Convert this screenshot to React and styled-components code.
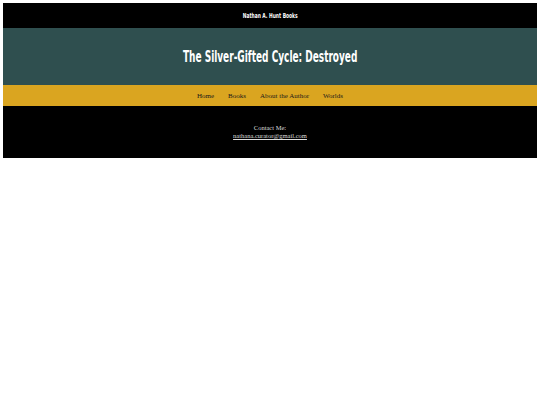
import styled, { createGlobalStyle } from "styled-components";

const GlobalStyle = createGlobalStyle`
  body {
    margin: 3px;
    background-color: #fff;
    font-family: "Liberation Serif", "Times New Roman", serif;
  }
`;

// Impact-like condensed heading face, squeezed horizontally
const Condensed = styled.span`
  display: inline-block;
  font-family: Impact, "DejaVu Sans Condensed", "DejaVu Sans", sans-serif;
  font-stretch: condensed;
  font-weight: bold;
  transform: scaleX(${(p) => p.$squeeze || 0.7});
  white-space: nowrap;
`;

const TopBar = styled.header`
  background-color: #000;
  color: #fff;
  height: 25px;
  display: flex;
  align-items: center;
  justify-content: center;
  font-size: 7px;
`;

const Banner = styled.div`
  background-color: #2f4f4f;
  height: 57px;
  display: flex;
  align-items: center;
  justify-content: center;
`;

const Title = styled.h1`
  margin: 0;
  color: #fff;
  font-size: 15px;
  font-weight: bold;
`;

const Nav = styled.nav`
  background-color: #daa520;
  height: 21px;
  display: flex;
  align-items: center;
  justify-content: center;
  gap: 14px;
`;

const NavLink = styled.a`
  color: #1a1a1a;
  font-size: 7px;
  text-decoration: none;
`;

const Footer = styled.footer`
  background-color: #000;
  color: #ddd;
  height: 52px;
  display: flex;
  flex-direction: column;
  align-items: center;
  justify-content: center;
  font-size: 6.5px;
  line-height: 8px;
`;

const Email = styled.a`
  color: #ddd;
  text-decoration: underline;
`;

export default function App() {
  return (
    <>
      <GlobalStyle />
      <TopBar>
        <Condensed $squeeze={0.7}>Nathan A. Hunt Books</Condensed>
      </TopBar>
      <Banner>
        <Title>
          <Condensed $squeeze={0.665}>The Silver-Gifted Cycle: Destroyed</Condensed>
        </Title>
      </Banner>
      <Nav>
        <NavLink href="#">Home</NavLink>
        <NavLink href="#">Books</NavLink>
        <NavLink href="#">About the Author</NavLink>
        <NavLink href="#">Worlds</NavLink>
      </Nav>
      <Footer>
        <div>Contact Me:</div>
        <Email href="#">nathana.curator@gmail.com</Email>
      </Footer>
    </>
  );
}
